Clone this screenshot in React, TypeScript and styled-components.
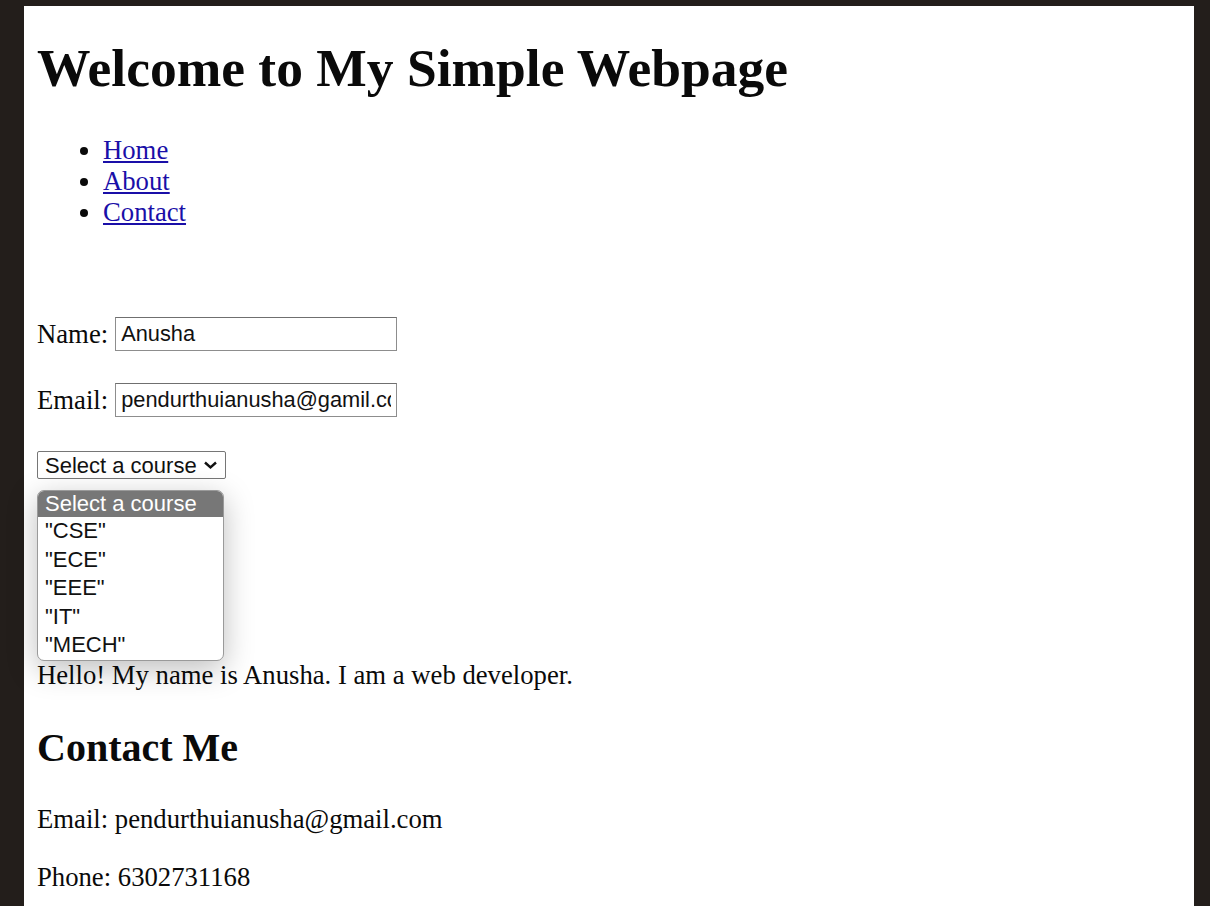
import React from "react";
import styled, { createGlobalStyle } from "styled-components";

const GlobalStyle = createGlobalStyle`
  html, body {
    margin: 0;
    padding: 0;
    background-color: #231e1b;
  }
`;

const Frame = styled.div`
  height: 906px;
  padding: 6px 16px 0 24px;
  box-sizing: border-box;
  overflow: hidden;
  background-color: #231e1b;
`;

const Page = styled.div`
  height: 100%;
  box-sizing: border-box;
  padding: 31px 13px 0 13px;
  background-color: #ffffff;
  color: #0a0a0a;
  font-family: "Liberation Serif", "Times New Roman", serif;
  font-size: 26.7px;
  line-height: 31px;
`;

const Title = styled.h1`
  margin: 0 0 36px 0;
  font-size: 53.5px;
  line-height: 62px;
  font-weight: bold;
`;

const NavList = styled.ul`
  margin: 0;
  padding-left: 66px;
  line-height: 31px;
`;

const NavLink = styled.a`
  color: #1a0fa8;
  text-decoration: underline;
`;

const Form = styled.form`
  margin: 89px 0 0 0;
`;

const Field = styled.div`
  display: flex;
  align-items: center;
  gap: 7px;
  height: 34px;
  margin-bottom: 32px;
`;

const Input = styled.input`
  width: 282px;
  height: 34px;
  box-sizing: border-box;
  padding: 0 5px;
  border: 1px solid #8d8d8d;
  border-top-color: #6f6f6f;
  border-radius: 0;
  font-family: "Liberation Sans", Arial, sans-serif;
  font-size: 21.8px;
  color: #111;
  background: #fff;
  outline: none;
`;

const SelectWrap = styled.div`
  position: relative;
  width: 189px;
  margin-top: -32px;
  padding-top: 34px;
`;

const SelectBox = styled.div`
  display: flex;
  align-items: center;
  gap: 6px;
  height: 28px;
  box-sizing: border-box;
  padding: 0 6px 0 7px;
  border: 1px solid #767676;
  border-radius: 2px;
  font-family: "Liberation Sans", Arial, sans-serif;
  font-size: 22px;
  color: #111;
  background: #fff;
  white-space: nowrap;
`;

const Dropdown = styled.div`
  position: absolute;
  top: 73px;
  left: 0;
  width: 187px;
  height: 171px;
  box-sizing: border-box;
  border: 1px solid #9a9a9a;
  border-radius: 7px;
  overflow: hidden;
  background: #fff;
  box-shadow: 0 8px 30px rgba(0, 0, 0, 0.26);
  font-family: "Liberation Sans", Arial, sans-serif;
  font-size: 22px;
  z-index: 2;
`;

const Option = styled.div<{ $active?: boolean }>`
  height: ${(p) => (p.$active ? "26px" : "28.6px")};
  line-height: ${(p) => (p.$active ? "26px" : "28.6px")};
  padding-left: 7px;
  color: ${(p) => (p.$active ? "#ffffff" : "#111111")};
  background: ${(p) => (p.$active ? "#777777" : "transparent")};
  white-space: nowrap;
`;

const Intro = styled.p`
  margin: 181px 0 0 0;
`;

const Heading = styled.h2`
  margin: 34px 0 33px 0;
  font-size: 40px;
  line-height: 46px;
  font-weight: bold;
`;

const Line = styled.p`
  margin: 0 0 27px 0;
`;

const Chevron = () => (
  <svg width="15" height="10" viewBox="0 0 15 10">
    <path d="M2 2.5 L7.5 7.5 L13 2.5" fill="none" stroke="#111" strokeWidth="2.4" />
  </svg>
);

const courses = ['"CSE"', '"ECE"', '"EEE"', '"IT"', '"MECH"'];

export default function App() {
  return (
    <>
      <GlobalStyle />
      <Frame>
        <Page>
          <Title>Welcome to My Simple Webpage</Title>
          <NavList>
            <li><NavLink href="#home">Home</NavLink></li>
            <li><NavLink href="#about">About</NavLink></li>
            <li><NavLink href="#contact">Contact</NavLink></li>
          </NavList>

          <Form onSubmit={(e) => e.preventDefault()}>
            <Field>
              <label htmlFor="name">Name:</label>
              <Input id="name" type="text" defaultValue="Anusha" />
            </Field>
            <Field>
              <label htmlFor="email">Email:</label>
              <Input id="email" type="text" defaultValue="pendurthuianusha@gamil.com" />
            </Field>
            <SelectWrap>
              <SelectBox>
                <span>Select a course</span>
                <Chevron />
              </SelectBox>
              <Dropdown>
                <Option $active>Select a course</Option>
                {courses.map((c) => (
                  <Option key={c}>{c}</Option>
                ))}
              </Dropdown>
            </SelectWrap>
          </Form>

          <Intro>Hello! My name is Anusha. I am a web developer.</Intro>

          <Heading>Contact Me</Heading>
          <Line>Email: pendurthuianusha@gmail.com</Line>
          <Line>Phone: 6302731168</Line>
        </Page>
      </Frame>
    </>
  );
}
